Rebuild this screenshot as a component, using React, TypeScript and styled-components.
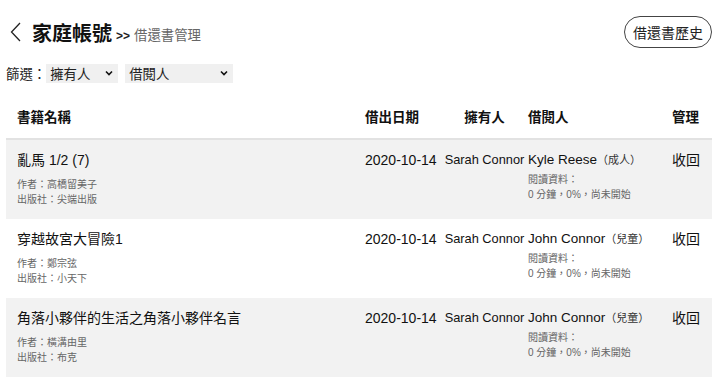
import React from "react";
import styled, { createGlobalStyle } from "styled-components";

const GlobalStyle = createGlobalStyle`
  body {
    margin: 0;
    background: #fff;
    font-family: "Liberation Sans", "Noto Sans CJK TC", sans-serif;
    color: #1a1a1a;
  }
`;

type Loan = {
  title: string;
  author: string;
  publisher: string;
  date: string;
  owner: string;
  borrower: string;
  role: string;
};

const loans: Loan[] = [
  {
    title: "亂馬 1/2 (7)",
    author: "高橋留美子",
    publisher: "尖端出版",
    date: "2020-10-14",
    owner: "Sarah Connor",
    borrower: "Kyle Reese",
    role: "成人",
  },
  {
    title: "穿越故宮大冒險1",
    author: "鄭宗弦",
    publisher: "小天下",
    date: "2020-10-14",
    owner: "Sarah Connor",
    borrower: "John Connor",
    role: "兒童",
  },
  {
    title: "角落小夥伴的生活之角落小夥伴名言",
    author: "橫溝由里",
    publisher: "布克",
    date: "2020-10-14",
    owner: "Sarah Connor",
    borrower: "John Connor",
    role: "兒童",
  },
];

const Page = styled.div`
  padding: 16px 8px 0 6px;
`;

const TopBar = styled.div`
  display: flex;
  align-items: center;
  justify-content: space-between;
  height: 32px;
`;

const TitleGroup = styled.div`
  display: flex;
  align-items: center;
  gap: 4px;
  padding-left: 4px;
`;

const BackIcon = styled.svg`
  width: 11px;
  height: 20px;
  margin-right: 7px;
`;

const Title = styled.h1`
  margin: 0;
  font-size: 20px;
  font-weight: 700;
  color: #111;
`;

const Crumb = styled.span`
  font-size: 13.4px;
  color: #666;
  margin-top: 4px;

  b {
    font-weight: 700;
    font-size: 12px;
    color: #222;
    margin-right: 4px;
  }
`;

const HistoryButton = styled.button`
  height: 32px;
  padding: 0 8px;
  border: 1px solid #444;
  border-radius: 16px;
  background: #fff;
  font-family: inherit;
  font-size: 14px;
  color: #222;
`;

const FilterRow = styled.div`
  display: flex;
  align-items: center;
  margin-top: 15px;
  font-size: 13.4px;
  color: #222;
`;

const Select = styled.div<{ $width: number }>`
  display: flex;
  align-items: center;
  justify-content: space-between;
  width: ${(p) => p.$width}px;
  height: 19px;
  padding: 0 5px 0 4px;
  margin-right: 7px;
  box-sizing: border-box;
  background: #f0f0f0;
  font-size: 13.4px;
`;

const Table = styled.div`
  margin-top: 18px;
`;

const Row = styled.div<{ $shade?: boolean; $head?: boolean }>`
  display: grid;
  grid-template-columns: 359px 76px 87px 144px 1fr;
  align-items: start;
  min-height: ${(p) => (p.$head ? 39 : 79)}px;
  padding: ${(p) => (p.$head ? "5px 0 0" : "11px 0 0")};
  box-sizing: border-box;
  background: ${(p) => (p.$shade ? "#f2f2f2" : "#fff")};
  border-bottom: ${(p) => (p.$head ? "2px solid #e2e2e2" : "none")};
`;

const HeadCell = styled.div<{ $center?: boolean }>`
  font-size: 13.5px;
  font-weight: 700;
  color: #111;
  text-align: ${(p) => (p.$center ? "center" : "left")};
  &:first-child {
    padding-left: 11px;
  }
`;

const BookCell = styled.div`
  padding-left: 11px;
`;

const BookTitle = styled.div`
  font-size: 14px;
  line-height: 18px;
  color: #111;
  margin-bottom: 8px;
`;

const Meta = styled.div`
  font-size: 10px;
  line-height: 15px;
  color: #666;
`;

const ReadingInfo = styled.div`
  margin-top: 3px;
`;

const Cell = styled.div<{ $center?: boolean; $size?: number }>`
  font-size: ${(p) => p.$size ?? 14}px;
  line-height: 18px;
  color: #111;
  white-space: nowrap;
  text-align: ${(p) => (p.$center ? "center" : "left")};
`;

const Role = styled.span`
  font-size: 11px;
  color: #333;
`;

const Action = styled.div`
  font-size: 14px;
  line-height: 18px;
  color: #111;
`;

const Chevron = () => (
  <svg width="8" height="6" viewBox="0 0 8 6">
    <path d="M1 1.5 L4 4.5 L7 1.5" fill="none" stroke="#111" strokeWidth="1.6" />
  </svg>
);

export default function App() {
  return (
    <>
      <GlobalStyle />
      <Page>
        <TopBar>
          <TitleGroup>
            <BackIcon viewBox="0 0 11 20">
              <path d="M10 1 L1.5 10 L10 19" fill="none" stroke="#222" strokeWidth="1.3" />
            </BackIcon>
            <Title>家庭帳號</Title>
            <Crumb>
              <b>&gt;&gt;</b>借還書管理
            </Crumb>
          </TitleGroup>
          <HistoryButton>借還書歷史</HistoryButton>
        </TopBar>

        <FilterRow>
          <span>篩選：</span>
          <Select $width={72}>
            擁有人 <Chevron />
          </Select>
          <Select $width={108}>
            借閱人 <Chevron />
          </Select>
        </FilterRow>

        <Table>
          <Row $head>
            <HeadCell>書籍名稱</HeadCell>
            <HeadCell>借出日期</HeadCell>
            <HeadCell $center>擁有人</HeadCell>
            <HeadCell>借閱人</HeadCell>
            <HeadCell>管理</HeadCell>
          </Row>
          {loans.map((l, i) => (
            <Row key={i} $shade={i % 2 === 0}>
              <BookCell>
                <BookTitle>{l.title}</BookTitle>
                <Meta>作者：{l.author}</Meta>
                <Meta>出版社：{l.publisher}</Meta>
              </BookCell>
              <Cell>{l.date}</Cell>
              <Cell $center $size={12.8}>
                {l.owner}
              </Cell>
              <div>
                <Cell $size={13.5}>
                  {l.borrower}
                  <Role>（{l.role}）</Role>
                </Cell>
                <ReadingInfo>
                  <Meta>閱讀資料：</Meta>
                  <Meta>0 分鐘，0%，尚未開始</Meta>
                </ReadingInfo>
              </div>
              <Action>收回</Action>
            </Row>
          ))}
        </Table>
      </Page>
    </>
  );
}
